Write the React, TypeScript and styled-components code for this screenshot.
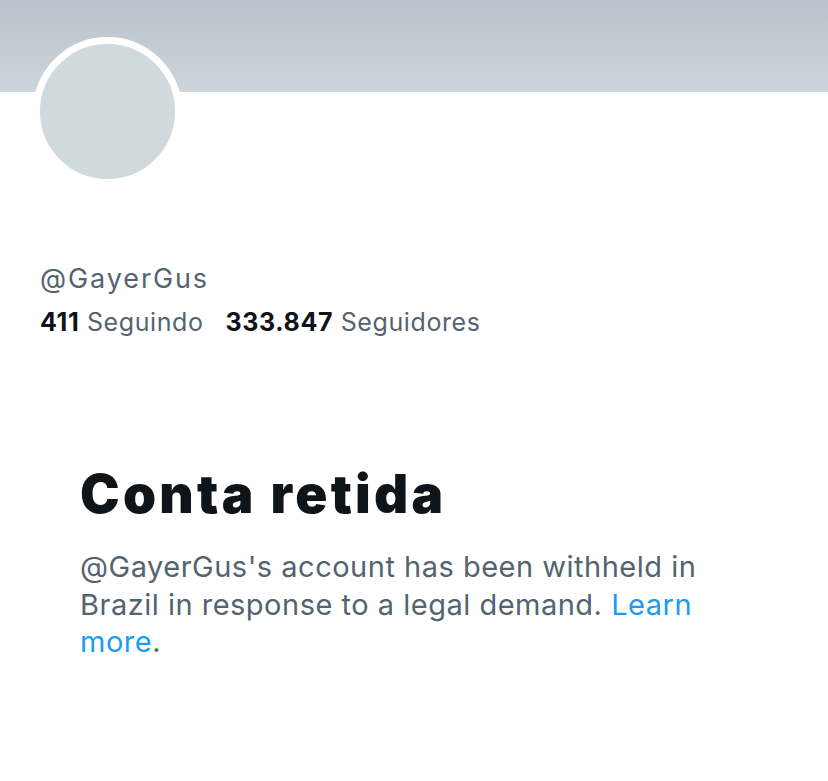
import React from "react";
import styled, { createGlobalStyle } from "styled-components";

const GlobalStyle = createGlobalStyle`
  html, body {
    margin: 0;
    padding: 0;
    background: #ffffff;
  }
  body {
    font-family: "Inter", "Liberation Sans", Arial, sans-serif;
    -webkit-font-smoothing: antialiased;
  }
`;

const Page = styled.div`
  width: 828px;
  min-height: 781px;
  background: #ffffff;
  overflow: hidden;
`;

const Banner = styled.div`
  height: 92px;
  background: linear-gradient(180deg, #bac3cb 0%, #ccd5db 100%);
`;

const ProfileHead = styled.div`
  padding: 0 40px;
`;

const Avatar = styled.div`
  width: 135px;
  height: 135px;
  margin-top: -55px;
  margin-left: -7px;
  border-radius: 50%;
  background: #cfd9de;
  border: 7px solid #ffffff;
`;

const Handle = styled.div`
  margin-top: 76px;
  font-size: 27px;
  line-height: 34px;
  letter-spacing: 1.9px;
  color: #536471;
`;

const Stats = styled.div`
  display: flex;
  gap: 22px;
  margin-top: 10px;
  font-size: 25px;
  line-height: 32px;
  letter-spacing: 0.6px;
  color: #536471;
`;

const Stat = styled.span`
  white-space: nowrap;
`;

const Count = styled.b`
  font-weight: 700;
  color: #0f1419;
`;

const Notice = styled.div`
  padding: 0 80px;
  margin-top: 126px;
`;

const Title = styled.h1`
  margin: 0;
  font-size: 53px;
  line-height: 60px;
  font-weight: 900;
  color: #0f1419;
  letter-spacing: 3.3px;
`;

const Message = styled.p`
  margin: 24px 0 0;
  width: 640px;
  font-size: 29px;
  line-height: 37.5px;
  letter-spacing: 0.5px;
  color: #536471;
`;

const Link = styled.a`
  color: #1d9bf0;
  text-decoration: none;
`;

export default function App() {
  return (
    <Page>
      <GlobalStyle />
      <Banner />
      <ProfileHead>
        <Avatar />
        <Handle>@GayerGus</Handle>
        <Stats>
          <Stat>
            <Count>411</Count> Seguindo
          </Stat>
          <Stat>
            <Count>333.847</Count> Seguidores
          </Stat>
        </Stats>
      </ProfileHead>
      <Notice>
        <Title>Conta retida</Title>
        <Message>
          @GayerGus's account has been withheld in Brazil in response to a
          legal demand. <Link href="#">Learn more</Link>.
        </Message>
      </Notice>
    </Page>
  );
}
